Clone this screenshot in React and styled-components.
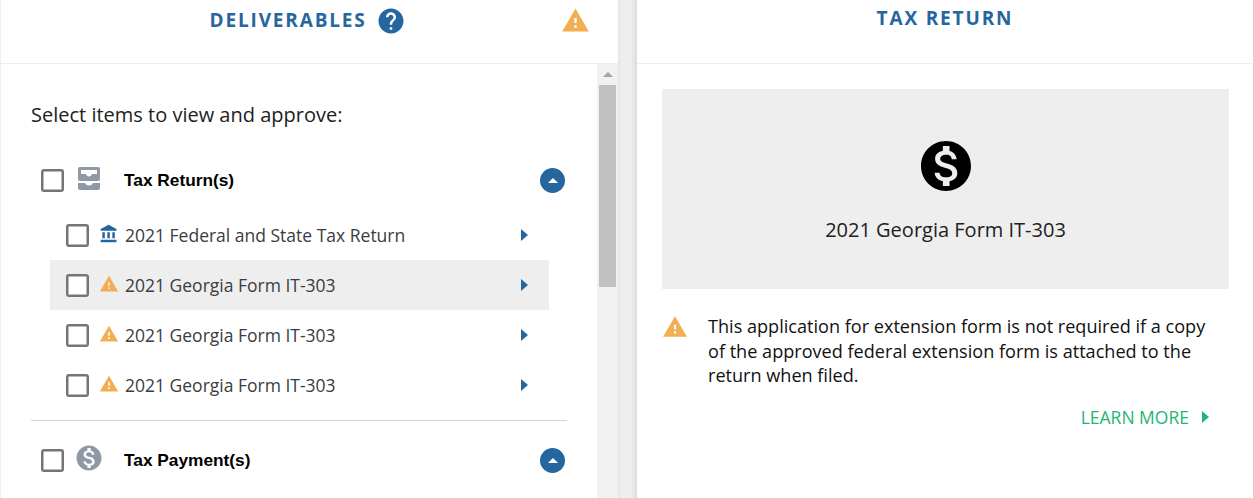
import React from "react";
import styled, { createGlobalStyle } from "styled-components";

const Global = createGlobalStyle`
  html, body { margin: 0; padding: 0; background: #fff; }
  body { font-family: "Open Sans", "Liberation Sans", sans-serif; overflow: hidden; }
`;

const Page = styled.div`
  display: flex;
  width: 1253px;
  height: 498px;
  overflow: hidden;
`;
const LeftPanel = styled.section`
  width: 617px;
  flex: none;
  border-left: 1px solid #eee;
  display: flex;
  flex-direction: column;
`;
const Splitter = styled.div`
  width: 19px;
  flex: none;
  background: linear-gradient(to right, #e6e6e6 0%, #eeeeee 20%, #eeeeee 65%, #dcdcdc 100%);
`;
const RightPanel = styled.section`
  flex: 1;
  min-width: 0;
  display: flex;
  flex-direction: column;
`;
const LeftHeader = styled.header`
  flex: none;
  height: 56px;
  border-bottom: 1px solid #eee;
  display: flex;
  align-items: flex-start;
  padding: 7px 28px 0 208.5px;
`;
const RightHeader = styled.header`
  flex: none;
  height: 64px;
  box-sizing: border-box;
  border-bottom: 1px solid #eee;
  display: flex;
  justify-content: center;
  padding-top: 5px;
`;
const Title = styled.h2`
  margin: 0;
  font-size: 19px;
  line-height: 26px;
  font-weight: 700;
  letter-spacing: 1.85px;
  color: #26669f;
`;
const HelpIcon = styled.svg`
  width: 30px;
  height: 30px;
  margin: -1px 0 0 9px;
  fill: #26669f;
`;
const HeaderWarn = styled.svg`
  width: 29px;
  height: 29px;
  fill: #f2ae52;
  margin: -1px 0 0 auto;
`;
const LeftBody = styled.div`
  flex: 1;
  min-height: 0;
  display: flex;
`;
const ListArea = styled.div`
  flex: 1;
  min-width: 0;
  padding: 0 30px;
`;
const Scrollbar = styled.div`
  width: 21px;
  flex: none;
  background: #f1f1f1;
  display: flex;
  flex-direction: column;
  align-items: center;
`;
const ScrollUp = styled.div`
  height: 21px;
  flex: none;
  display: flex;
  align-items: center;
  justify-content: center;
  &::before {
    content: "";
    border-left: 5px solid transparent;
    border-right: 5px solid transparent;
    border-bottom: 5px solid #a3a3a3;
  }
`;
const ScrollThumb = styled.div`
  width: 17px;
  height: 202px;
  background: #c1c1c1;
`;
const Prompt = styled.p`
  margin: 37px 0 0;
  font-size: 20px;
  line-height: 28px;
  color: #212121;
`;
const GroupRow = styled.div`
  display: flex;
  align-items: center;
  height: 50px;
  padding-left: 10px;
  margin-top: ${(p) => p.$top}px;
`;
const Check = styled.span`
  width: 18.5px;
  height: 19px;
  flex: none;
  border: 2px solid #757575;
  border-radius: 3px;
  background: #fff;
  box-shadow: inset 0 0 0 0.5px #757575;
  display: block;
`;
const TrayIcon = styled.svg`
  width: 22px;
  height: 23px;
  flex: none;
  fill: #8f98a3;
  margin: -3px 0 0 14.5px;
`;
const CoinIcon = styled.svg`
  width: 30px;
  height: 30px;
  flex: none;
  fill: #8f98a3;
  margin: -4px 0 0 10.5px;
`;
const GroupLabel = styled.span`
  font-family: "Liberation Sans", Arial, sans-serif;
  font-size: 17.3px;
  font-weight: 700;
  color: #000;
  margin-left: ${(p) => p.$left}px;
`;
const Toggle = styled.span`
  width: 25px;
  height: 25px;
  border-radius: 50%;
  background: #26669f;
  margin-left: auto;
  margin-right: 2px;
  display: flex;
  align-items: center;
  justify-content: center;
  &::before {
    content: "";
    border-left: 5px solid transparent;
    border-right: 5px solid transparent;
    border-bottom: 5px solid #fff;
  }
`;
const SubList = styled.div`
  display: flex;
  flex-direction: column;
  margin-top: 5px;
  padding: 0 18px 0 19px;
`;
const SubRow = styled.div`
  display: flex;
  align-items: center;
  height: 50px;
  padding-left: 16px;
  background: ${(p) => (p.$active ? "#eee" : "transparent")};
`;
const SubIcon = styled.svg`
  width: 20px;
  height: 20px;
  flex: none;
  margin: -2px 0 0 10.5px;
  fill: ${(p) => (p.$blue ? "#26669f" : "#f2ae52")};
`;
const SubLabel = styled.span`
  font-size: 17.5px;
  color: #3a3d42;
  margin-left: 6px;
`;
const Chevron = styled.span`
  margin-left: auto;
  margin-right: 21px;
  border-top: 6.5px solid transparent;
  border-bottom: 6.5px solid transparent;
  border-left: 7px solid #26669f;
`;
const Rule = styled.hr`
  margin: 10px 0 0;
  border: 0;
  border-top: 1px solid #d3d3d3;
  width: 536px;
`;
const RightBody = styled.div`
  padding: 25px 24px 0 25px;
  display: flex;
  flex-direction: column;
`;
const Card = styled.div`
  height: 200px;
  background: #eee;
  display: flex;
  flex-direction: column;
  align-items: center;
`;
const CardIcon = styled.svg`
  width: 60px;
  height: 60px;
  margin-top: 47px;
  fill: #000;
`;
const CardLabel = styled.div`
  font-size: 20px;
  line-height: 28px;
  color: #212121;
  margin-top: 20px;
`;
const Notice = styled.div`
  display: flex;
  margin-top: 25px;
  padding-right: 14px;
`;
const NoticeIcon = styled.svg`
  width: 26px;
  height: 26px;
  flex: none;
  fill: #f2ae52;
`;
const NoticeText = styled.p`
  margin: 0 0 0 20px;
  font-size: 18.1px;
  line-height: 24.5px;
  color: #111;
`;
const LearnRow = styled.div`
  display: flex;
  align-items: center;
  justify-content: flex-end;
  margin-top: 15px;
  padding-right: 20px;
`;
const LearnLink = styled.a`
  font-size: 17.5px;
  line-height: 28px;
  color: #1fb574;
`;
const LearnArrow = styled.span`
  margin-left: 13px;
  border-top: 6.5px solid transparent;
  border-bottom: 6.5px solid transparent;
  border-left: 7px solid #1fb574;
`;

const WARN = "M1 21h22L12 2 1 21zm12-3h-2v-2h2v2zm0-4h-2v-4h2v4z";
const MONEY = "M12 2C6.48 2 2 6.48 2 12s4.48 10 10 10 10-4.48 10-10S17.52 2 12 2zm1.41 16.09V20h-2.67v-1.93c-1.71-.36-3.16-1.46-3.27-3.4h1.96c.1 1.05.82 1.87 2.65 1.87 1.96 0 2.4-.98 2.4-1.59 0-.83-.44-1.61-2.67-2.14-2.48-.6-4.18-1.62-4.18-3.67 0-1.72 1.39-2.84 3.11-3.21V4h2.67v1.95c1.86.45 2.79 1.86 2.85 3.39H14.3c-.05-1.11-.64-1.87-2.22-1.87-1.5 0-2.4.68-2.4 1.64 0 .84.65 1.39 2.67 1.91s4.18 1.39 4.18 3.91c-.01 1.83-1.38 2.83-3.12 3.16z";
const BANK = "M4 10v7h3v-7H4zm6 0v7h3v-7h-3zM2 22h19v-3H2v3zm14-12v7h3v-7h-3zm-4.5-9L2 6v2h19V6l-9.5-5z";
const HELP = "M12 2C6.48 2 2 6.48 2 12s4.48 10 10 10 10-4.48 10-10S17.52 2 12 2zm1 17h-2v-2h2v2zm2.07-7.75l-.9.92C13.45 12.9 13 13.5 13 15h-2v-.5c0-1.1.45-2.1 1.17-2.83l1.24-1.26c.37-.36.59-.86.59-1.41 0-1.1-.9-2-2-2s-2 .9-2 2H8c0-2.21 1.79-4 4-4s4 1.79 4 4c0 .88-.36 1.68-.93 2.25z";
const TRAY = "M2 0h18a2 2 0 0 1 2 2v10a2 2 0 0 1-2 2H2a2 2 0 0 1-2-2V2a2 2 0 0 1 2-2zM3 3v4h5c.5 1.500 1.500 2.500 3 2.500s2.500-1 3-2.500h5V3H3zM0 16h7c.5 1.500 2 2.500 4 2.500s3.500-1 4-2.500h7v5a2 2 0 0 1-2 2H2a2 2 0 0 1-2-2v-5z";

const rows = [
  { label: "2021 Federal and State Tax Return", icon: BANK, blue: true },
  { label: "2021 Georgia Form IT-303", icon: WARN, active: true },
  { label: "2021 Georgia Form IT-303", icon: WARN },
  { label: "2021 Georgia Form IT-303", icon: WARN },
];

export default function App() {
  return (
    <Page>
      <Global />
      <LeftPanel>
        <LeftHeader>
          <Title>DELIVERABLES</Title>
          <HelpIcon viewBox="0 0 24 24"><path d={HELP} /></HelpIcon>
          <HeaderWarn viewBox="0 0 24 24"><path d={WARN} /></HeaderWarn>
        </LeftHeader>
        <LeftBody>
          <ListArea>
            <Prompt>Select items to view and approve:</Prompt>
            <GroupRow $top={26}>
              <Check />
              <TrayIcon viewBox="0 0 22 23"><path fillRule="evenodd" d={TRAY} /></TrayIcon>
              <GroupLabel $left={24}>Tax Return(s)</GroupLabel>
              <Toggle />
            </GroupRow>
            <SubList>
              {rows.map((r, i) => (
                <SubRow key={i} $active={r.active}>
                  <Check />
                  <SubIcon $blue={r.blue} viewBox="0 0 24 24"><path d={r.icon} /></SubIcon>
                  <SubLabel>{r.label}</SubLabel>
                  <Chevron />
                </SubRow>
              ))}
            </SubList>
            <Rule />
            <GroupRow $top={14}>
              <Check />
              <CoinIcon viewBox="0 0 24 24"><path d={MONEY} /></CoinIcon>
              <GroupLabel $left={20}>Tax Payment(s)</GroupLabel>
              <Toggle />
            </GroupRow>
          </ListArea>
          <Scrollbar>
            <ScrollUp />
            <ScrollThumb />
          </Scrollbar>
        </LeftBody>
      </LeftPanel>
      <Splitter />
      <RightPanel>
        <RightHeader>
          <Title>TAX RETURN</Title>
        </RightHeader>
        <RightBody>
          <Card>
            <CardIcon viewBox="0 0 24 24"><path d={MONEY} /></CardIcon>
            <CardLabel>2021 Georgia Form IT-303</CardLabel>
          </Card>
          <Notice>
            <NoticeIcon viewBox="0 0 24 24"><path d={WARN} /></NoticeIcon>
            <NoticeText>
              This application for extension form is not required if a copy of the approved federal extension form is attached to the return when filed.
            </NoticeText>
          </Notice>
          <LearnRow>
            <LearnLink>LEARN MORE</LearnLink>
            <LearnArrow />
          </LearnRow>
        </RightBody>
      </RightPanel>
    </Page>
  );
}
